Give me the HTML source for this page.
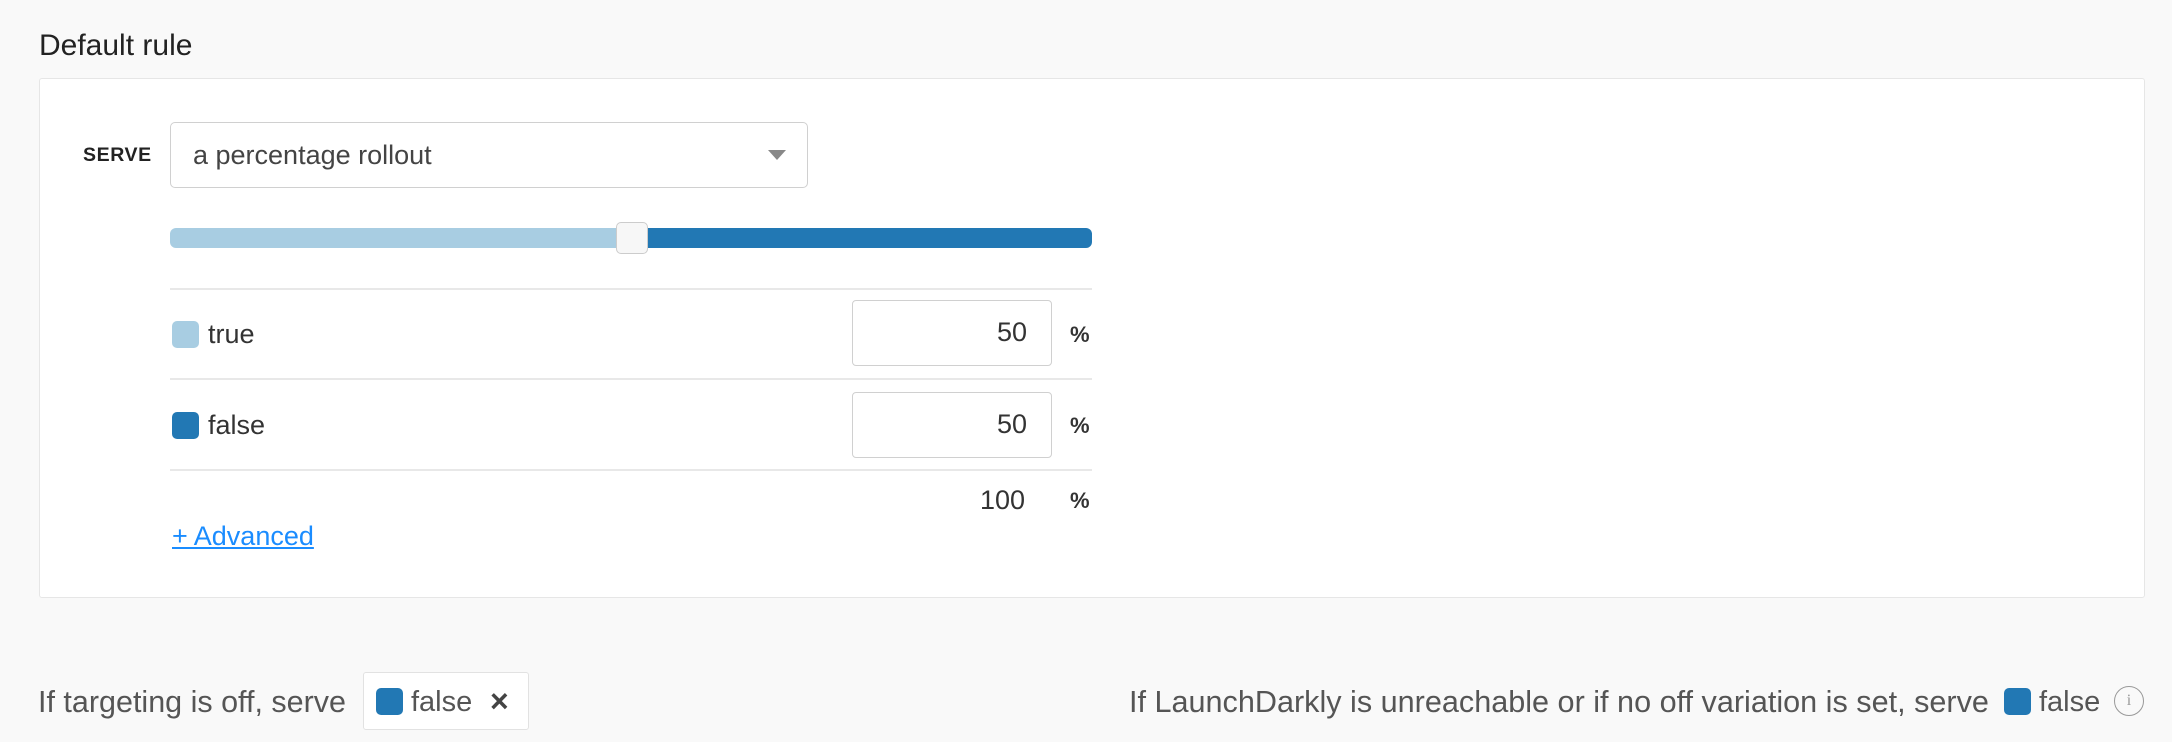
<!DOCTYPE html>
<html><head><meta charset="utf-8"><style>
*{box-sizing:border-box;margin:0;padding:0}
body{width:2172px;height:742px;background:#f9f9f9;font-family:"Liberation Sans",sans-serif;color:#333;position:relative;overflow:hidden}
.a{position:absolute;white-space:nowrap}
.card{left:39px;top:78px;width:2106px;height:520px;background:#fff;border:1px solid #e6e6e6;border-radius:3px}
.sel{left:170px;top:122px;width:638px;height:66px;border:1.5px solid #d0d0d0;border-radius:5px;background:#fff}
.inp{width:200px;height:66px;border:1.5px solid #d0d0d0;border-radius:4px;background:#fff;font-size:27px;text-align:right;padding-right:24px;line-height:63px;color:#333}
.line{left:170px;width:922px;height:1.5px;background:#e8e8e8}
.sw{width:27px;height:27px;border-radius:5px}
.t{font-size:27px;line-height:34px}
.b{font-size:29px;line-height:34px;color:#555}
</style></head><body>
<div class="a t" style="left:39px;top:28px;font-size:30px;line-height:36px;color:#222">Default rule</div>
<div class="a card"></div>
<div class="a" style="left:83px;top:144px;font-size:19.5px;font-weight:bold;letter-spacing:0.6px;color:#222">SERVE</div>
<div class="a sel"></div>
<div class="a t" style="left:193px;top:138px;color:#444">a percentage rollout</div>
<div class="a" style="left:768px;top:150px;width:0;height:0;border-left:9px solid transparent;border-right:9px solid transparent;border-top:10px solid #888"></div>
<div class="a" style="left:170px;top:228px;width:922px;height:20px;border-radius:6px;background:linear-gradient(to right,#a8cde2 0,#a8cde2 462px,#2278b4 462px)"></div>
<div class="a" style="left:616px;top:222px;width:32px;height:32px;border:1.5px solid #ccc;border-radius:5px;background:#f7f7f7"></div>
<div class="a line" style="top:288px"></div>
<div class="a sw" style="left:172px;top:321px;background:#a8cde2"></div>
<div class="a t" style="left:208px;top:317px">true</div>
<div class="a inp" style="left:852px;top:300px">50</div>
<div class="a t" style="left:1070px;top:318px;font-weight:bold;font-size:22px">%</div>
<div class="a line" style="top:378px"></div>
<div class="a sw" style="left:172px;top:412px;background:#2278b4"></div>
<div class="a t" style="left:208px;top:408px">false</div>
<div class="a inp" style="left:852px;top:392px">50</div>
<div class="a t" style="left:1070px;top:409px;font-weight:bold;font-size:22px">%</div>
<div class="a line" style="top:469px"></div>
<div class="a t" style="left:925px;top:483px;width:100px;text-align:right">100</div>
<div class="a t" style="left:1070px;top:484px;font-weight:bold;font-size:22px">%</div>
<div class="a t" style="left:172px;top:519px;color:#1a8cff;text-decoration:underline">+ Advanced</div>
<div class="a b" style="left:38px;top:685px;font-size:30.5px">If targeting is off, serve</div>
<div class="a" style="left:363px;top:672px;width:166px;height:58px;background:#fff;border:1px solid #e2e2e2;border-radius:3px"></div>
<div class="a sw" style="left:376px;top:688px;background:#2278b4"></div>
<div class="a b" style="left:411px;top:685px">false</div>
<div class="a b" style="left:490px;top:684px;font-size:32px;font-weight:bold;color:#444">×</div>
<div class="a b" style="left:1129px;top:685px;font-size:30.6px">If LaunchDarkly is unreachable or if no off variation is set, serve</div>
<div class="a sw" style="left:2004px;top:688px;background:#2278b4"></div>
<div class="a b" style="left:2039px;top:685px">false</div>
<div class="a" style="left:2114px;top:686px;width:30px;height:30px;border:1.5px solid #999;border-radius:50%;color:#999;font-size:16px;text-align:center;line-height:27px;font-family:'Liberation Serif',serif">i</div>
</body></html>
